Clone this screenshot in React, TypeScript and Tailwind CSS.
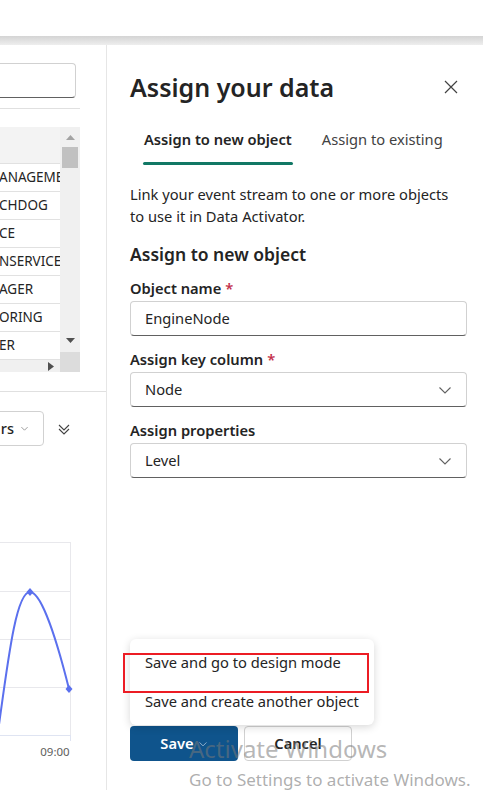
import React from "react";

const font = { fontFamily: '"Noto Sans", "Open Sans", sans-serif' };

function Chevron({ className = "" }: { className?: string }) {
  return (
    <svg viewBox="0 0 16 16" className={className} fill="none" stroke="currentColor" strokeWidth="1.1">
      <path d="M2.5 5.5 L8 11 L13.5 5.5" />
    </svg>
  );
}

function LeftPanel() {
  const rows = ["ANAGEMENT", "CHDOG", "CE", "NSERVICEFABRIC", "AGER", "ORING", "ER"];
  return (
    <div className="w-[107px] shrink-0 border-r border-[#e6e6e6] overflow-hidden flex flex-col bg-white">
      <div className="mt-[18px] h-[35px] w-[80px] ml-[-4px] rounded-[4px] border border-[#d1d1d1] border-b-[#616161]" />
      <div className="mt-[10px] h-px w-[80px] bg-[#e0e0e0]" />
      <div className="mt-[18px] w-[80px] h-[245px] flex">
        <div className="w-[60px] flex flex-col">
          <div className="h-[37px] bg-[#f3f3f3] border-b border-[#e1e1e1]" />
          {rows.map((r) => (
            <div key={r} className="h-[28px] border-b border-[#e1e1e1] overflow-hidden whitespace-nowrap text-[13.5px] leading-[27px] text-[#242424] ml-[-1px]">
              {r}
            </div>
          ))}
          <div className="flex-1 bg-[#f0f0f0] flex items-center justify-end pr-[6px]">
            <svg width="6" height="9" viewBox="0 0 6 9"><path d="M0 0 L6 4.5 L0 9Z" fill="#505050" /></svg>
          </div>
        </div>
        <div className="w-[20px] flex flex-col bg-[#f0f0f0]">
          <div className="h-[20px] flex items-center justify-center">
            <svg width="9" height="5" viewBox="0 0 9 5"><path d="M0 5 L4.5 0 L9 5Z" fill="#a3a3a3" /></svg>
          </div>
          <div className="h-[21px] mx-[2px] bg-[#c1c1c1]" />
          <div className="flex-1" />
          <div className="h-[24px] flex items-center justify-center">
            <svg width="9" height="5" viewBox="0 0 9 5"><path d="M0 0 L4.5 5 L9 0Z" fill="#505050" /></svg>
          </div>
          <div className="h-[20px] bg-[#dcdcdc]" />
        </div>
      </div>
      <div className="mt-[19px] h-px w-full bg-[#e0e0e0]" />
      <div className="mt-[19px] flex items-center">
        <div className="h-[35px] w-[60px] ml-[-16px] rounded-[4px] border border-[#d1d1d1] flex items-center justify-end pr-[14px] gap-[6px]">
          <span className="text-[14.5px] text-[#242424] font-medium">rs</span>
          <Chevron className="w-[9px] h-[9px] text-[#616161]" />
        </div>
        <svg width="14" height="14" viewBox="0 0 14 14" className="ml-[13px]" fill="none" stroke="#424242" strokeWidth="1.1">
          <path d="M2 3 L7 8 L12 3" />
          <path d="M2 7 L7 12 L12 7" />
        </svg>
      </div>
      <svg width="107" height="240" viewBox="0 530 107 240" className="mt-[84px]">
        <g stroke="#e8e8ec" strokeWidth="1">
          <line x1="0" y1="542.5" x2="70" y2="542.5" />
          <line x1="0" y1="591.5" x2="70" y2="591.5" />
          <line x1="0" y1="639.5" x2="70" y2="639.5" />
          <line x1="0" y1="687.5" x2="70" y2="687.5" />
          <line x1="70.5" y1="542" x2="70.5" y2="736" />
        </g>
        <line x1="0" y1="735.5" x2="70" y2="735.5" stroke="#dfe4f2" strokeWidth="1" />
        <line x1="70.5" y1="735" x2="70.5" y2="741" stroke="#dfe4f2" strokeWidth="1" />
        <path d="M-2 732 C 8 660, 16 592, 30 592 C 42 592, 58 645, 69 689" fill="none" stroke="#5b70ee" strokeWidth="2" />
        <path d="M30 588 L33.5 592 L30 596 L26.5 592Z" fill="#5b70ee" />
        <path d="M69 685 L72.5 689 L69 693 L65.5 689Z" fill="#5b70ee" />
        <text x="55" y="756" textAnchor="middle" fontSize="11.5" fill="#605e5c" style={font}>09:00</text>
      </svg>
    </div>
  );
}

function Label({ text, required }: { text: string; required?: boolean }) {
  return (
    <div className="text-[14.7px] font-semibold text-[#242424] leading-[20px]">
      {text}
      {required && <span className="text-[#c4314b] ml-[4px]">*</span>}
    </div>
  );
}

function Field({ value, select }: { value: string; select?: boolean }) {
  return (
    <div className="mt-[3px] h-[35px] shrink-0 rounded-[4px] border border-[#d1d1d1] border-b-[#616161] flex items-center pl-[14px] pr-[13px] justify-between">
      <span className="text-[14.7px] text-[#242424]">{value}</span>
      {select && <Chevron className="w-[16px] h-[16px] text-[#616161]" />}
    </div>
  );
}

export default function App() {
  return (
    <div className="w-[483px] h-[790px] overflow-hidden bg-white relative" style={font}>
      <div className="h-[36px] bg-white" />
      <div className="h-[9px] bg-gradient-to-b from-[#d4d4d4] to-[#eeeeee]" />
      <div className="flex h-[745px]">
        <LeftPanel />
        <div className="flex-1 flex flex-col pl-[23px] pr-[16px] relative">
          <div className="flex items-center justify-between mt-[26px]">
            <h1 className="text-[25px] font-semibold text-[#242424] leading-[32px]">Assign your data</h1>
            <svg width="14" height="14" viewBox="0 0 14 14" className="mr-[9px]" stroke="#424242" strokeWidth="1.2">
              <path d="M1 1 L13 13 M13 1 L1 13" />
            </svg>
          </div>
          <div className="flex mt-[26px] gap-[16px]">
            <div className="px-[14px] flex flex-col">
              <span className="text-[14.7px] font-semibold text-[#242424] leading-[20px]">Assign to new object</span>
              <div className="mt-[13px] h-[3px] rounded-full bg-[#117865] mx-[-1px]" />
            </div>
            <span className="text-[14.7px] text-[#424242] leading-[20px]">Assign to existing</span>
          </div>
          <p className="mt-[18px] text-[14.7px] leading-[22px] text-[#242424]">
            Link your event stream to one or more objects
            <br />
            to use it in Data Activator.
          </p>
          <h2 className="mt-[15px] text-[17.5px] font-semibold text-[#242424] leading-[24px]">Assign to new object</h2>
          <div className="mt-[12px] flex flex-col">
            <Label text="Object name" required />
            <Field value="EngineNode" />
          </div>
          <div className="mt-[13px] flex flex-col">
            <Label text="Assign key column" required />
            <Field value="Node" select />
          </div>
          <div className="mt-[13px] flex flex-col">
            <Label text="Assign properties" />
            <Field value="Level" select />
          </div>
          <div className="flex-1" />
          <div className="relative mb-[29px] flex gap-[6px]">
            <div className="absolute left-0 bottom-[36px] w-[244px] bg-white rounded-[6px] shadow-[0_2px_8px_rgba(0,0,0,0.16)] py-[4px] flex flex-col">
              <div className="h-[39px] flex items-center pl-[15px] text-[14.7px] text-[#242424]">Save and go to design mode</div>
              <div className="h-[39px] flex items-center pl-[15px] text-[14.7px] text-[#242424]">Save and create another object</div>
            </div>
            <div className="absolute left-[-7px] bottom-[68px] w-[246px] h-[40px] border-[2.5px] border-[#ec1c24]" />
            <div className="w-[108px] h-[35px] rounded-[4px] bg-[#0f548c] flex items-center justify-center gap-[4px]">
              <span className="text-[14.7px] font-semibold text-white">Save</span>
              <Chevron className="w-[10px] h-[10px] text-[#c8d6e6]" />
            </div>
            <div className="w-[108px] h-[35px] rounded-[4px] border border-[#d1d1d1] flex items-center justify-center">
              <span className="text-[14.7px] font-semibold text-[#242424]">Cancel</span>
            </div>
          </div>
        </div>
      </div>
      <div className="absolute left-[189px] top-[733px] flex flex-col pointer-events-none">
        <span className="text-[24px] leading-[32px] text-[rgba(120,120,120,0.55)]">Activate Windows</span>
        <span className="text-[17px] leading-[22px] mt-[4px] text-[rgba(120,120,120,0.6)]">Go to Settings to activate Windows.</span>
      </div>
    </div>
  );
}
